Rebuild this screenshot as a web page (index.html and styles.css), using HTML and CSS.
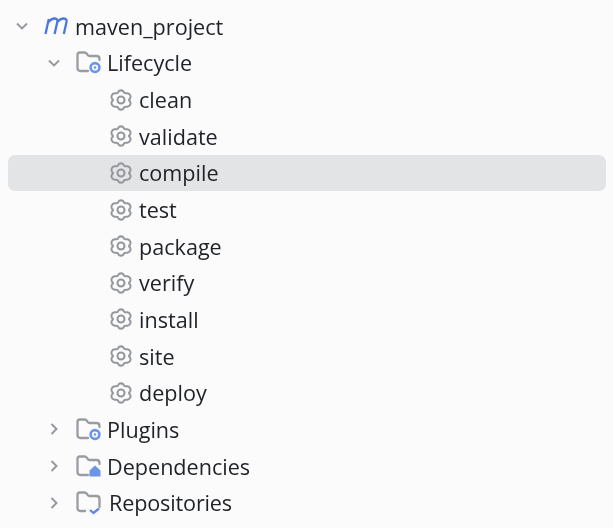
FILE: index.html
```html
<!DOCTYPE html>
<html lang="en">
<head>
    <meta charset="UTF-8">
    <title>Maven</title>
    <link rel="stylesheet" href="styles.css">
</head>
<body>
    <svg class="defs" width="0" height="0">
        <symbol id="gear" viewBox="0 0 26 26">
            <path d="M10.8 3.2 Q13 1.9 15.2 3.2 L16.3 4.9 Q16.9 5.7 17.9 5.7 L19.9 5.8 Q22 6.1 23 8 Q23.9 10.1 22.8 11.6 L21.9 12.3 Q21.5 13 21.9 13.7 L22.8 14.6 Q23.9 16.2 23 18 Q22 19.9 19.9 20.2 L17.9 20.3 Q16.9 20.3 16.3 21.1 L15.2 22.8 Q13 24.1 10.8 22.8 L9.7 21.1 Q9.1 20.3 8.1 20.3 L6.1 20.2 Q4 19.9 3 18 Q2.1 16.2 3.2 14.6 L4.1 13.7 Q4.5 13 4.1 12.3 L3.2 11.6 Q2.1 10.1 3 8 Q4 6.1 6.1 5.8 L8.1 5.7 Q9.1 5.7 9.7 4.9 Z" fill="none" stroke="#94979b" stroke-width="2.2"/>
            <circle cx="13" cy="13" r="3.8" fill="none" stroke="#94979b" stroke-width="2.2"/>
        </symbol>
        <symbol id="folder" viewBox="0 0 27 27">
            <path d="M12 22 H4.5 Q1.5 22 1.5 19 V6 Q1.5 3.5 4 3.5 H8.5 Q10 3.5 10.8 4.7 L11.9 6.3 Q12.5 7 13.5 7 H20.5 Q23.5 7 23.5 10 V11" fill="none" stroke="#999ca0" stroke-width="2.3" stroke-linecap="round"/>
        </symbol>
    </svg>

    <div class="tree">
        <div class="row level-0">
            <svg class="chevron" viewBox="0 0 16 16"><path d="M3 5.5 L8 10.5 L13 5.5"/></svg>
            <svg class="icon" viewBox="0 0 27 20"><path class="maven" d="M1.5 18 L4.8 3 M4.4 6 Q7.5 2.4 10.8 2.5 Q14 2.8 13.3 6 L10.6 18 M13.3 6 Q16.4 2.4 19.8 2.5 Q23.2 2.8 22.5 6 L19.8 18"/></svg>
            <span class="label">maven_project</span>
        </div>
        <div class="row level-1">
            <svg class="chevron" viewBox="0 0 16 16"><path d="M3 5.5 L8 10.5 L13 5.5"/></svg>
            <svg class="icon"><use href="#folder"/><circle class="badge-ring" cx="19" cy="18.5" r="4.4"/><circle class="badge-dot" cx="19" cy="18.5" r="1.3"/></svg>
            <span class="label">Lifecycle</span>
        </div>
        <div class="row level-2"><svg class="gear"><use href="#gear"/></svg><span class="label">clean</span></div>
        <div class="row level-2"><svg class="gear"><use href="#gear"/></svg><span class="label">validate</span></div>
        <div class="row level-2 selected"><svg class="gear"><use href="#gear"/></svg><span class="label">compile</span></div>
        <div class="row level-2"><svg class="gear"><use href="#gear"/></svg><span class="label">test</span></div>
        <div class="row level-2"><svg class="gear"><use href="#gear"/></svg><span class="label">package</span></div>
        <div class="row level-2"><svg class="gear"><use href="#gear"/></svg><span class="label">verify</span></div>
        <div class="row level-2"><svg class="gear"><use href="#gear"/></svg><span class="label">install</span></div>
        <div class="row level-2"><svg class="gear"><use href="#gear"/></svg><span class="label">site</span></div>
        <div class="row level-2"><svg class="gear"><use href="#gear"/></svg><span class="label">deploy</span></div>
        <div class="row level-1">
            <svg class="chevron" viewBox="0 0 16 16"><path d="M5.5 3 L10.5 8 L5.5 13"/></svg>
            <svg class="icon"><use href="#folder"/><circle class="badge-ring" cx="19" cy="18.5" r="4.4"/><circle class="badge-dot" cx="19" cy="18.5" r="1.3"/></svg>
            <span class="label">Plugins</span>
        </div>
        <div class="row level-1">
            <svg class="chevron" viewBox="0 0 16 16"><path d="M5.5 3 L10.5 8 L5.5 13"/></svg>
            <svg class="icon"><use href="#folder"/><path class="badge-home" d="M13.5 23.5 V17.5 L19 12.5 L24.5 17.5 V23.5 Z"/></svg>
            <span class="label">Dependencies</span>
        </div>
        <div class="row level-1">
            <svg class="chevron" viewBox="0 0 16 16"><path d="M5.5 3 L10.5 8 L5.5 13"/></svg>
            <svg class="icon"><path class="repo" d="M9 22 H4.5 Q1.5 22 1.5 19 V6 Q1.5 3.5 4 3.5 H8.5 Q10 3.5 10.8 4.7 L11.9 6.3 Q12.5 7 13.5 7 H20.5 Q23.5 7 23.5 10 V18"/><path class="check" d="M14 21 L17.5 24 L23 19.5"/></svg>
            <span class="label label-repo">Repositories</span>
        </div>
    </div>
</body>
</html>
```

FILE: styles.css
```css
body {
    margin: 0;
    background-color: #fbfbfc;
    font-family: "Open Sans", "Noto Sans", sans-serif;
    color: #1f2226;
}

.defs {
    display: block;
    height: 0;
}

.tree {
    padding-top: 8px;
    filter: blur(0.6px);
}

.row {
    display: flex;
    align-items: center;
    height: 36.65px;
    margin: 0 7px 0 8px;
    border-radius: 7px;
}

.level-0 {
    padding-left: 6px;
}

.level-1 {
    padding-left: 38px;
}

.level-2 {
    padding-left: 101px;
}

.selected {
    background-color: #e3e4e6;
}

.chevron {
    width: 16px;
    height: 16px;
    margin-right: 14px;
    flex-shrink: 0;
}

.chevron path {
    fill: none;
    stroke: #94979b;
    stroke-width: 1.9;
}

.icon {
    width: 27px;
    height: 27px;
    margin-right: 4px;
    flex-shrink: 0;
}

.level-0 .icon {
    height: 20px;
}

.gear {
    width: 24px;
    height: 24px;
    margin-right: 6px;
    flex-shrink: 0;
}

.label {
    font-size: 21.6px;
    line-height: 30px;
    padding-top: 1px;
    white-space: nowrap;
}

.label-repo {
    margin-left: 2px;
    letter-spacing: -0.15px;
}

.maven {
    fill: none;
    stroke: #4a78e0;
    stroke-width: 2.3;
}

.badge-ring {
    fill: #fbfbfc;
    stroke: #6b95e8;
    stroke-width: 2.6;
}

.badge-dot {
    fill: #6b95e8;
}

.badge-home {
    fill: #6b95e8;
}

.repo {
    fill: none;
    stroke: #999ca0;
    stroke-width: 2.3;
    stroke-linecap: round;
}

.check {
    fill: none;
    stroke: #5b8ae6;
    stroke-width: 2.3;
}
```
